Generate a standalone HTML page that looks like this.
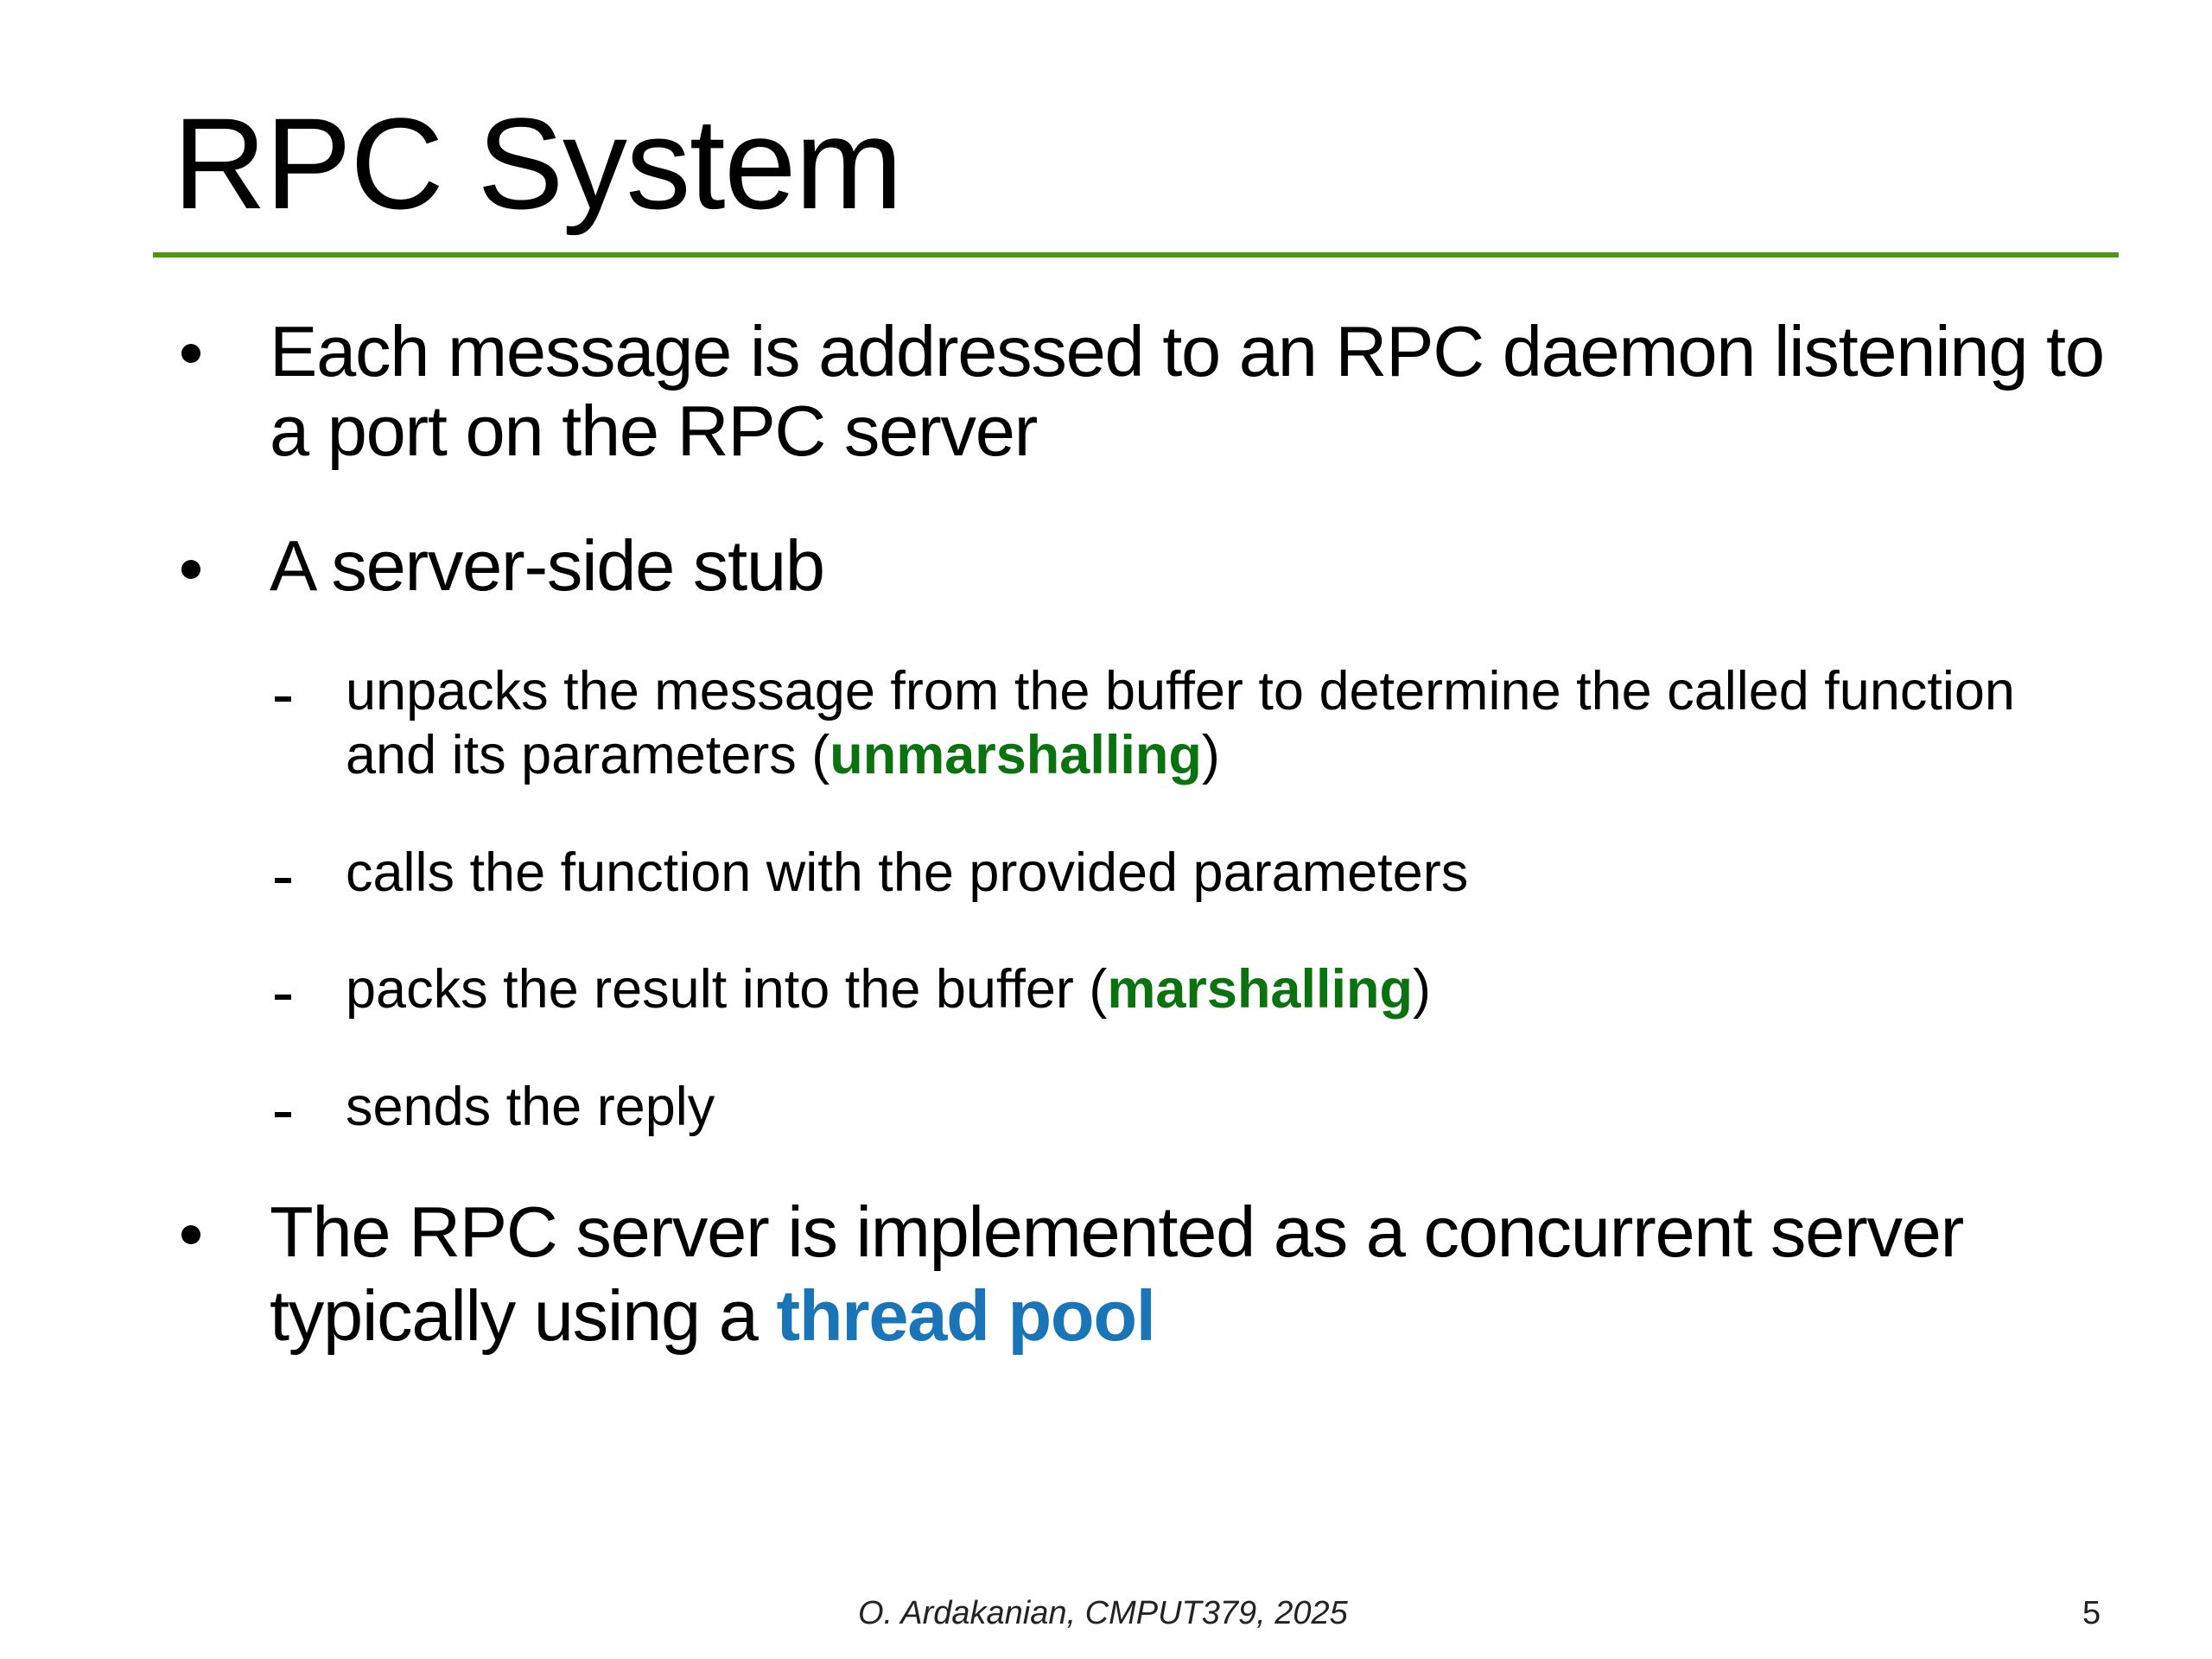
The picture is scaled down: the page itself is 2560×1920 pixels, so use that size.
<!DOCTYPE html>
<html><head><meta charset="utf-8"><style>
html,body{margin:0;padding:0;background:#fff}
body{width:2560px;height:1920px;position:relative;overflow:hidden;font-family:"Liberation Sans",Arial,sans-serif;color:#000}
.t{position:absolute;white-space:nowrap;line-height:1}
.title{left:200px;top:114px;font-size:150px;letter-spacing:-1.5px}
.rule{position:absolute;left:177px;top:292px;width:2285px;height:6px;background:#4f9614}
.b{font-size:83px;letter-spacing:-1.25px}
.s{font-size:63px;letter-spacing:0px}
.dot{position:absolute;width:22px;height:22px;border-radius:50%;background:#000}
.dash{position:absolute;width:19px;height:6px;background:#000}
.g{color:#0b7210;font-weight:bold}
.bl{color:#1a74b8;font-weight:bold}
.f{font-size:38px;font-style:italic;color:#222}
</style></head><body>
<div class="t title">RPC System</div>
<div class="rule" style="width:2275px"></div>

<div class="dot" style="left:210px;top:398px"></div>
<div class="t b" style="left:312px;top:365px">Each message is addressed to an RPC daemon listening to</div>
<div class="t b" style="left:312px;top:457px">a port on the RPC server</div>

<div class="dot" style="left:210px;top:648px"></div>
<div class="t b" style="left:312px;top:613px">A server-side stub</div>

<div class="dash" style="left:318px;top:806px"></div>
<div class="t s" style="left:400px;top:769px">unpacks the message from the buffer to determine the called function</div>
<div class="t s" style="left:400px;top:843px">and its parameters (<span class="g">unmarshalling</span>)</div>

<div class="dash" style="left:318px;top:1016px"></div>
<div class="t s" style="left:400px;top:979px">calls the function with the provided parameters</div>

<div class="dash" style="left:318px;top:1151px"></div>
<div class="t s" style="left:400px;top:1114px">packs the result into the buffer (<span class="g">marshalling</span>)</div>

<div class="dash" style="left:318px;top:1287px"></div>
<div class="t s" style="left:400px;top:1250px">sends the reply</div>

<div class="dot" style="left:210px;top:1418px"></div>
<div class="t b" style="left:312px;top:1384px">The RPC server is implemented as a concurrent server</div>
<div class="t b" style="left:312px;top:1481px">typically using a <span class="bl">thread pool</span></div>

<div class="t f" style="left:993px;top:1848px">O. Ardakanian, CMPUT379, 2025</div>
<div class="t f" style="left:2410px;top:1848px;font-style:normal">5</div>
</body></html>
